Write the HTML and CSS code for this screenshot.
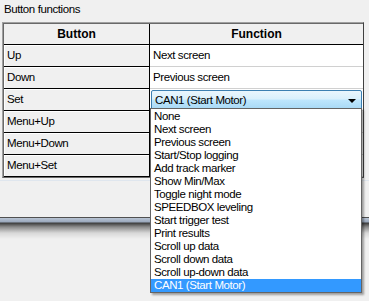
FILE: index.html
```html
<!DOCTYPE html>
<html>
<head>
<meta charset="utf-8">
<link rel="stylesheet" href="styles.css">
</head>
<body>
<div class="page">
  <div class="title">Button functions</div>
  <div class="grid">
    <div class="hcell">Button</div>
    <div class="hcell hlast">Function</div>
    <div class="bcell">Up</div>
    <div class="fcell">Next screen</div>
    <div class="bcell">Down</div>
    <div class="fcell">Previous screen</div>
    <div class="bcell">Set</div>
    <div class="fcell combo-cell">
      <div class="combo"><span>CAN1 (Start Motor)</span><span class="arrow"></span></div>
    </div>
    <div class="bcell">Menu+Up</div>
    <div class="fcell"></div>
    <div class="bcell">Menu+Down</div>
    <div class="fcell"></div>
    <div class="bcell">Menu+Set</div>
    <div class="fcell"></div>
  </div>
  <div class="sep"></div>
  <div class="bottom-edge"></div>

  <ul class="list">
    <li>None</li>
    <li>Next screen</li>
    <li>Previous screen</li>
    <li>Start/Stop logging</li>
    <li>Add track marker</li>
    <li>Show Min/Max</li>
    <li>Toggle night mode</li>
    <li>SPEEDBOX leveling</li>
    <li>Start trigger test</li>
    <li>Print results</li>
    <li>Scroll up data</li>
    <li>Scroll down data</li>
    <li>Scroll up-down data</li>
    <li class="sel">CAN1 (Start Motor)</li>
  </ul>
</div>
</body>
</html>
```

FILE: styles.css
```css
html, body {
  margin: 0;
  padding: 0;
  background: #f0f0f0;
}
body {
  font-family: "Liberation Sans", Arial, sans-serif;
  font-size: 11.5px;
  letter-spacing: -0.4px;
  color: #000;
  width: 369px;
  height: 301px;
  overflow: hidden;
}
.page {
  position: relative;
  width: 369px;
  height: 301px;
}
.title {
  padding: 2px 0 0 4px;
  height: 22px;
  box-sizing: border-box;
  line-height: 14px;
}
.grid {
  margin-left: 2px;
  width: 362px;
  display: grid;
  grid-template-columns: 146px 1fr;
  grid-template-rows: 21px repeat(6, 22px);
  border-top: 1px solid #a0a0a0;
  border-left: 1px solid #a0a0a0;
  border-right: 1px solid #404040;
  border-bottom: 1px solid #696969;
  box-shadow: inset 1px 1px 0 #696969;
  background: #f0f0f0;
  box-sizing: border-box;
  padding: 1px 0 0 1px;
  height: 156px;
}
.hcell {
  font-weight: bold;
  text-align: center;
  line-height: 20px;
  border-bottom: 1px solid #000;
  border-right: 1px solid #000;
  background: #f0f0f0;
  font-size: 12px;
  letter-spacing: 0;
}
.hlast {
  border-right: none;
}
.bcell {
  background: #f0f0f0;
  border-bottom: 1px solid #000;
  border-right: 1px solid #000;
  box-shadow: inset 1px 1px 0 #fff;
  padding-left: 3px;
  line-height: 21px;
}
.fcell {
  background: #fff;
  border-bottom: 1px solid #d0d0d0;
  padding-left: 3px;
  line-height: 21px;
  position: relative;
}
.combo-cell {
  padding: 0;
}
.combo {
  margin: 1px 1px 0 1px;
  height: 20px;
  box-sizing: border-box;
  border: 1px solid #3c7fb1;
  border-radius: 2px;
  background: linear-gradient(to bottom, #eaf6fd 0%, #d9f0fc 45%, #bee6fd 50%, #a7d9f5 100%);
  display: flex;
  align-items: center;
  justify-content: space-between;
  padding: 0 5px 0 3px;
  line-height: 18px;
}
.arrow {
  width: 0;
  height: 0;
  border-left: 4px solid transparent;
  border-right: 4px solid transparent;
  border-top: 4px solid #000;
  margin-top: 1px;
}
.sep {
  margin-top: 2px;
  height: 1px;
  background: #dfe6ee;
  width: 369px;
}
.bottom-edge {
  margin-top: 36px;
  height: 22px;
  background: linear-gradient(to bottom, #505050 0px, #505050 1px, #b8c4d4 1px, #9aa8bc 5px, #3c3c3c 6px, #8c8c8c 10px, #d8d8d8 16px, #f0f0f0 22px);
}
.list {
  position: absolute;
  left: 150px;
  top: 108px;
  width: 212px;
  margin: 0;
  padding: 1px 0 0 0;
  list-style: none;
  background: #fff;
  border: 1px solid #646464;
  box-sizing: border-box;
  height: 185px;
  box-shadow: 2px 2px 2px rgba(0, 0, 0, 0.35);
}
.list li {
  height: 13px;
  line-height: 13px;
  padding-left: 3px;
  white-space: nowrap;
}
.list li.sel {
  background: #3399ff;
  color: #fff;
}
```
